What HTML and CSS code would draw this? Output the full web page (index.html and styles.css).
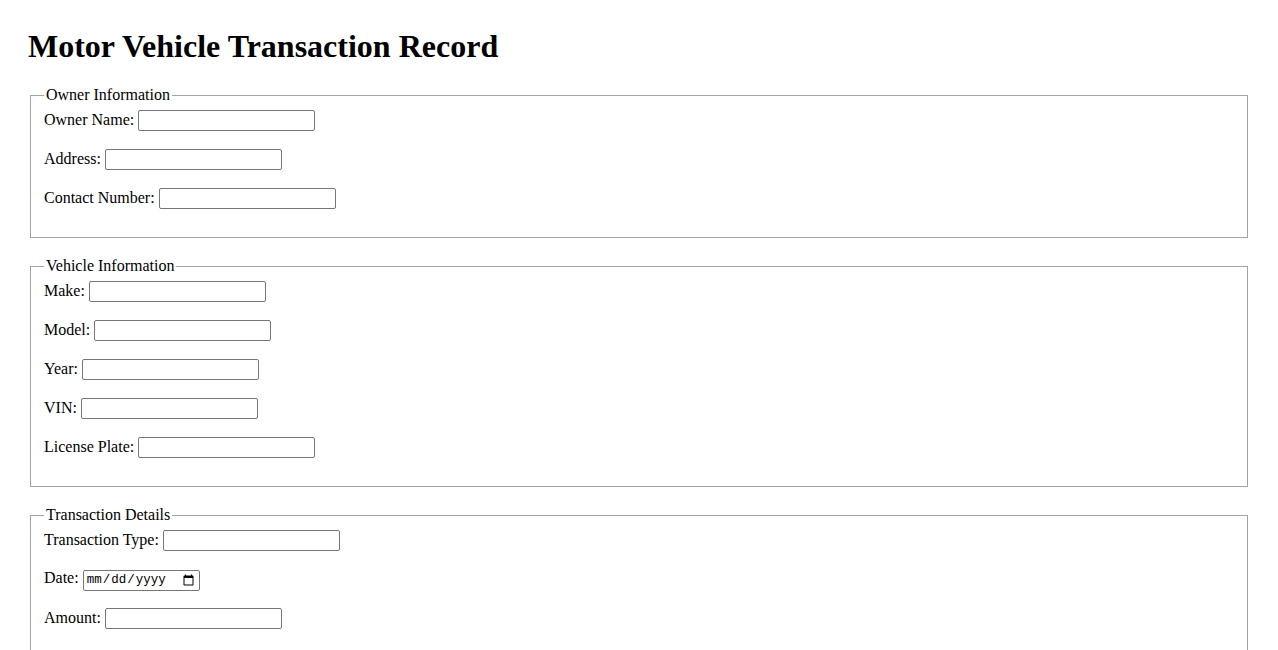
FILE: index.html
```html
<!DOCTYPE html>
<html lang="en">
<head>
<meta charset="utf-8">
<title>Motor Vehicle Transaction Record</title>
<link rel="stylesheet" href="styles.css">
</head>
<body>
<h1 class="title">Motor Vehicle Transaction Record</h1>
<form class="record">
  <fieldset class="section">
    <legend>Owner Information</legend>
    <div class="row"><label for="owner">Owner Name:</label> <input class="field" type="text" id="owner"></div>
    <div class="row"><label for="address">Address:</label> <input class="field" type="text" id="address"></div>
    <div class="row"><label for="contact">Contact Number:</label> <input class="field" type="text" id="contact"></div>
  </fieldset>
  <fieldset class="section">
    <legend>Vehicle Information</legend>
    <div class="row"><label for="make">Make:</label> <input class="field" type="text" id="make"></div>
    <div class="row"><label for="model">Model:</label> <input class="field" type="text" id="model"></div>
    <div class="row"><label for="year">Year:</label> <input class="field" type="text" id="year"></div>
    <div class="row"><label for="vin">VIN:</label> <input class="field" type="text" id="vin"></div>
    <div class="row"><label for="plate">License Plate:</label> <input class="field" type="text" id="plate"></div>
  </fieldset>
  <fieldset class="section">
    <legend>Transaction Details</legend>
    <div class="row"><label for="ttype">Transaction Type:</label> <input class="field" type="text" id="ttype"></div>
    <div class="row"><label for="date">Date:</label> <input class="date" type="date" id="date"></div>
    <div class="row"><label for="amount">Amount:</label> <input class="field" type="text" id="amount"></div>
  </fieldset>
  <button class="submit" type="submit">Submit</button>
</form>
</body>
</html>
```
FILE: styles.css
```css
html, body {
  background: #fff;
}
body {
  margin: 0;
  padding: 28px;
  font-family: "Liberation Serif", "Times New Roman", serif;
  font-size: 16px;
  color: #000;
}
.title {
  margin: 0 0 21px;
  font-size: 32px;
  font-weight: bold;
  line-height: 37px;
}
.section {
  margin: 0 2px 19px;
  padding: 6px 13px 10px;
  border: 1px solid #a3a3a3;
}
.section legend {
  padding: 0 2px;
}
.row {
  height: 24px;
  margin-bottom: 15px;
}
.field {
  width: 177px;
  height: 21px;
  box-sizing: border-box;
  font-family: "Liberation Sans", Arial, sans-serif;
  font-size: 13.33px;
  border: 1px solid #767676;
  border-radius: 2px;
  padding: 1px 2px;
}
.date {
  width: 117px;
  height: 21px;
  box-sizing: border-box;
  font-family: "Liberation Mono", monospace;
  font-size: 12.5px;
  border: 1px solid #767676;
  border-radius: 2px;
  padding: 1px 2px;
}
.submit {
  font-family: "Liberation Sans", Arial, sans-serif;
  font-size: 13.33px;
}
```
